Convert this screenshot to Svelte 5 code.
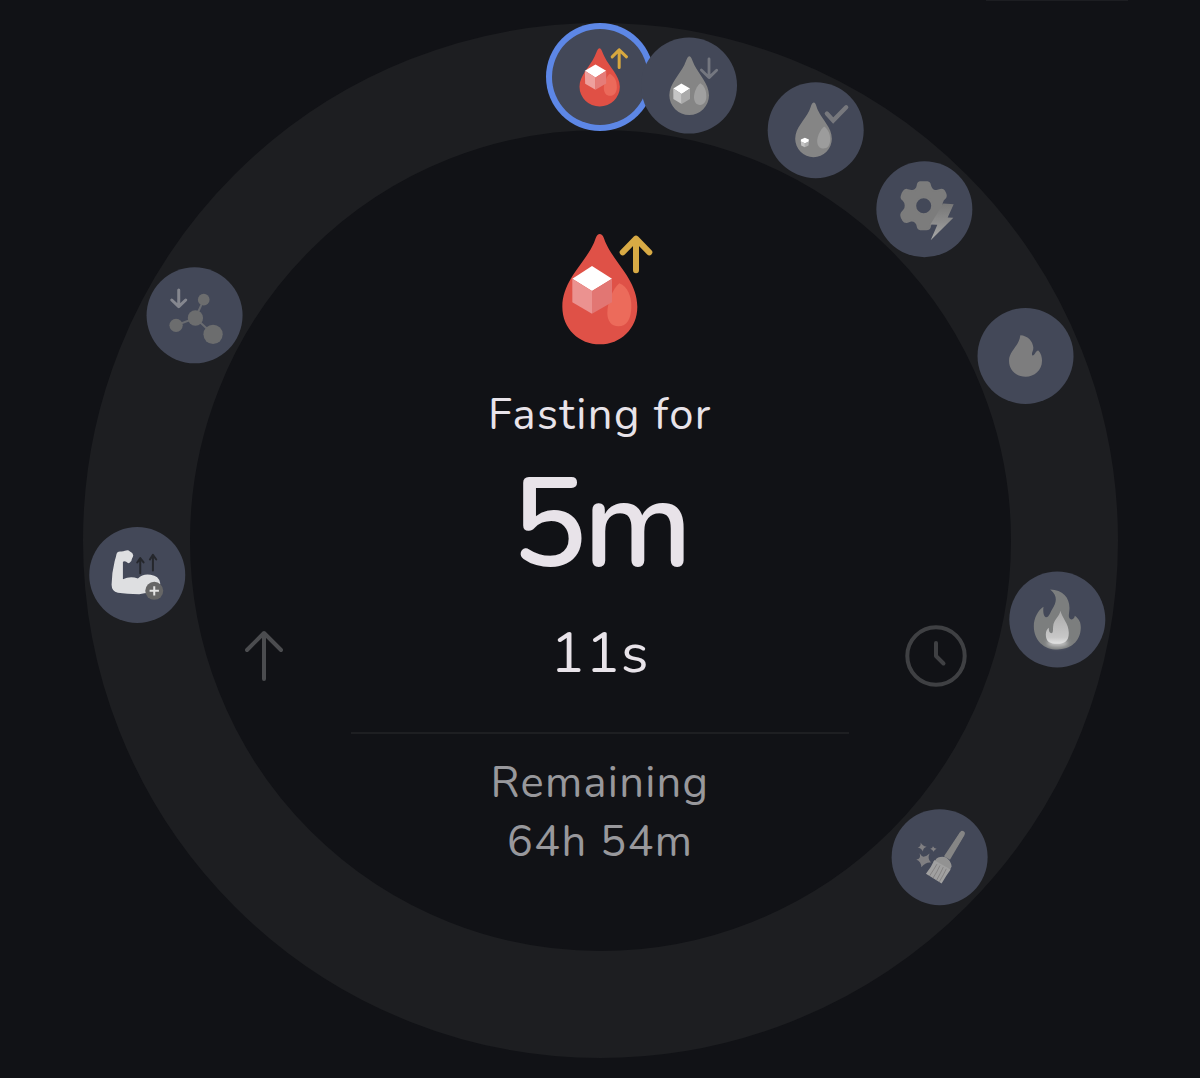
<script>
  const RADIUS = 464;

  // angle is in degrees, clockwise from the top of the ring
  const stages = [
    { icon: 'sugar-up', angle: 0, box: '66.5 55.5 288 288', active: true },
    { icon: 'sugar-down', angle: 11.06, box: '333 81 288 288' },
    { icon: 'sugar-ok', angle: 27.7, box: '22.5 36 288 288' },
    { icon: 'metabolism', angle: 44.35, box: '348 273 288 288' },
    { icon: 'fat-burn', angle: 66.5, box: '52.5 52.5 288 288' },
    { icon: 'ketosis', angle: 99.74, box: '58.5 33 288 288' },
    { icon: 'autophagy', angle: 132.95, box: '66 57 288 288' },
    { icon: 'growth', angle: 265.8, box: '27 49.5 288 288' },
    { icon: 'insulin', angle: 299.1, box: '49.5 51 288 288' },
  ];

  function place(angle) {
    const a = (angle * Math.PI) / 180;
    const x = Math.sin(a) * RADIUS;
    const y = -Math.cos(a) * RADIUS;
    return `transform: translate(${x.toFixed(2)}px, ${y.toFixed(2)}px)`;
  }
</script>

<main>
  <div class="sheet-edge"></div>
  <div class="dial">
    {#each stages as stage}
      <div class="stage" class:active={stage.active} style={place(stage.angle)}>
        <svg viewBox={stage.box} width="96" height="96">
          {#if stage.icon === 'sugar-up'}
            <path fill="#e05045" d="M209 113C215 113 217 124 224 139C238 169 270 195 270 229A60.500 59 0 0 1 149 229C149 195 180 169 194 139C201 124 203 113 209 113Z" />
            <path fill="#eb6a5b" d="M240 190C253 197 261 210 261 230C261 246 253 256 241 256C229 256 222 246 222 233C222 217 231 196 240 190Z" />
            <path fill="#fff" d="M197 162L229 181L197 201L165 181Z" />
            <path fill="#eea09d" d="M165 181L197 201V238L166 220Z" />
            <path fill="#e57c78" d="M229 181L197 201V238L229 219Z" />
            <path class="line" stroke="#d8a83f" stroke-width="9" d="M268 171V118M247 139L268 118L290 139" />
          {:else if stage.icon === 'sugar-down'}
            <path fill="#858585" d="M478 137C484 137 486 148 493 163C507 191 537 220 537 254A59.500 59 0 0 1 418 254C418 220 449 191 463 163C470 148 472 137 478 137Z" />
            <path fill="#a0a0a0" d="M511 218C522 224 529 239 529 257C529 273 522 283 510 283C498 283 492 273 492 260C492 244 501 225 511 218Z" />
            <path fill="#fff" d="M454 219L480 234L455 250L430 234Z" />
            <path fill="#c5c5c5" d="M430 234L455 250V280L430 265Z" />
            <path fill="#aaa" d="M480 234L455 250V280L480 265Z" />
            <path class="line" stroke="#747780" stroke-width="8.500" d="M537 145V200M514 178L537 201L560 179" />
          {:else if stage.icon === 'sugar-ok'}
            <path fill="#858585" d="M161 97C167 97 168 109 174 122C186 149 215 172 215 206A55 55 0 0 1 105 206C105 172 135 149 147 122C153 109 154 97 161 97Z" />
            <path fill="#9c9c9c" d="M192 169C203 177 210 190 210 208C210 225 202 235 190 235C178 235 171 226 171 213C171 198 181 178 192 169Z" />
            <path fill="#fff" d="M134 203L146 208L145 216L134 219L122 215V208Z" />
            <path fill="#c4c4c4" d="M122 213L134 219V231L123 226Z" />
            <path fill="#adadad" d="M146 213L134 219V231L145 226Z" />
            <path class="line square" stroke="#77787d" stroke-width="13" d="M200 130L219 151L258 111" />
          {:else if stage.icon === 'metabolism'}
            <defs>
              <linearGradient id="bolt" x1="0" y1="0" x2="0" y2="1">
                <stop offset="0" stop-color="#777" />
                <stop offset="0.5" stop-color="#8c8c8c" />
                <stop offset="1" stop-color="#aaa" />
              </linearGradient>
            </defs>
            <path
              fill="#7c7c7c"
              stroke="#7c7c7c"
              stroke-width="6"
              stroke-linejoin="round"
              fill-rule="evenodd"
              d="M479 336H501Q508 337 509 346C512 357 519 364 529 362L540 359Q549 357 553 366Q559 378 554 383L548 389C542 397 543 413 551 421Q558 426 556 437Q552 454 541 455L528 452C518 450 509 459 509 468Q508 477 498 477H480Q473 476 472 468C472 458 462 449 451 451L441 455Q433 457 428 449Q420 435 424 429L431 421C438 413 438 398 430 390Q422 385 424 378Q429 360 439 359L452 362C462 364 471 356 472 346Q473 337 479 336ZM490 381A25.500 25.500 0 1 0 490 432A25.500 25.500 0 1 0 490 381Z"
            />
            <path fill="url(#bolt)" d="M549 400L580 402L562 442L579 443L511 510L531 464L510 463Z" />
          {:else if stage.icon === 'fat-burn'}
            <path fill="#7d7d7e" d="M181 134C202 135 219 151 220 172C220 183 213 188 217 195C225 196 225 181 235 180C243 188 246 199 246 211C246 240 223 259 197 259C169 259 147 239 147 211C147 181 176 170 181 134Z" />
          {:else if stage.icon === 'ketosis'}
            <defs>
              <linearGradient id="inner" x1="0" y1="0" x2="0" y2="1">
                <stop offset="0" stop-color="#aaa" />
                <stop offset="0.8" stop-color="#c7c7c7" />
                <stop offset="1" stop-color="#e4e4e4" />
              </linearGradient>
              <filter id="glow" x="-30%" y="-100%" width="160%" height="300%">
                <feGaussianBlur stdDeviation="6" />
              </filter>
            </defs>
            <path fill="#7c7e7e" d="M181 87C219 88 239 111 239 142C239 156 235 166 239 173C246 181 254 175 255 166C269 177 273 186 273 202C272 244 241 267 203 267C161 267 132 239 132 197C132 173 145 149 161 139C159 155 162 169 168 170C178 171 180 158 188 145C199 127 206 107 181 87Z" />
            <ellipse cx="203" cy="248" rx="32" ry="10" fill="#c8c8c8" filter="url(#glow)" />
            <path fill="url(#inner)" d="M212 151C216 172 237 189 237 217C237 243 224 250 203 250C181 250 168 244 168 222C168 213 171 207 177 202C177 211 178 217 184 218C191 218 189 209 190 198C191 178 209 169 212 151Z" />
          {:else if stage.icon === 'autophagy'}
            <path class="line" stroke="#858585" stroke-width="15" d="M278 130L257 164" />
            <path fill="#858585" d="M271 126L285 134L241 209L223 198Z" />
            <path fill="#929292" d="M197 210Q206 197 228 201Q244 210 246 229L240 241L191 213Z" />
            <path fill="#a0a0a0" d="M194 210L243 238Q230 256 216 280L169 251Q184 232 194 210Z" />
            <path stroke="#777474" stroke-width="2" fill="none" d="M202 222Q194 236 180 257M211 226Q203 244 190 264M221 231Q214 247 201 270M230 236Q223 252 209 275" />
            <path fill="#807f82" d="M153 157Q158 167 171 170Q160 174 160 184Q155 174 144 173Q155 168 153 157ZM190 168Q193 174 201 176Q194 179 192 185Q189 179 182 176Q189 174 190 168ZM150 189Q158 202 164 199Q171 198 180 190Q172 205 184 217Q168 215 155 231Q155 215 140 208Q155 206 150 189Z" />
          {:else if stage.icon === 'growth'}
            <path fill="#dedfe1" d="M109 130Q111 123 119 123Q128 124 134 121Q144 117 149 123Q158 126 159 134Q158 141 155 145Q155 153 148 157Q144 160 138 154Q133 150 128 154V206Q150 196 173 204Q188 189 211 193Q236 196 240 218Q239 246 209 247Q191 248 177 251Q139 251 113 247Q94 243 94 223Q94 189 103 153Q107 141 109 130Z" />
            <path class="line" stroke="#25272c" stroke-width="6" d="M180 188V145M171 156L180 143L190 156M218 180V135M209 147L218 133L228 147" />
            <circle cx="222" cy="241" r="27" fill="#666" />
            <path stroke="#e4e4e4" stroke-width="6" d="M222 227V255M208 241H236" />
          {:else}
            <path stroke="#696b70" stroke-width="6" d="M196 203L221 148M196 203L138 225M196 203L249 252" />
            <g fill="#6c6d6e">
              <circle cx="221" cy="148" r="17.500" />
              <circle cx="196" cy="203" r="23" />
              <circle cx="138" cy="225" r="20" />
              <circle cx="249" cy="252" r="29" />
            </g>
            <path class="line" stroke="#85878f" stroke-width="9" d="M146 119V168M125 149L146 169L167 149" />
          {/if}
        </svg>
      </div>
    {/each}

    <section class="readout">
      <svg class="hero" viewBox="0 0 450 420" width="150" height="140">
        <path fill="#df5147" d="M209 42C219 42 221 54 227 68C253 128 322 181 322 260C322 326 271 373 210 373C147 373 97 326 97 260C97 181 166 128 192 68C198 54 200 42 209 42Z" />
        <path fill="#ec6b5b" d="M268 190C293 200 304 229 304 258C304 296 291 319 265 319C243 319 232 302 232 279C232 244 250 205 268 190Z" />
        <path fill="#fff" d="M186 138L246 176L186 213L127 176Z" />
        <path fill="#eb9290" d="M127 176L186 213V281L127 247Z" />
        <path fill="#e27673" d="M246 176L186 213V281L246 247Z" />
        <path class="line" stroke="#d8aa45" stroke-width="18" d="M318 151V56M278 97L318 56L358 97" />
      </svg>
      <div class="label">Fasting for</div>
      <div class="hours">5m</div>
      <div class="middle">
        <svg class="up" viewBox="0 0 38 52" width="38" height="52">
          <path class="line" stroke="#4b4c4f" stroke-width="4" d="M19 49V3M2 20L19 3L36 20" />
        </svg>
        <div class="seconds">11s</div>
        <svg viewBox="0 0 62 62" width="62" height="62">
          <circle cx="31" cy="31" r="28.700" fill="none" stroke="#3f4043" stroke-width="4" />
          <path class="line" stroke="#3f4043" stroke-width="4" d="M31 18V31L38.500 38.500" />
        </svg>
      </div>
      <div class="divider"></div>
      <div class="remaining">Remaining</div>
      <div class="remaining time">64h 54m</div>
    </section>
  </div>
</main>

<style>
  :global(body) {
    background: #111216;
  }

  main {
    position: relative;
    height: 1078px;
    padding-top: 23px;
    box-sizing: border-box;
    overflow: hidden;
    background: #111216;
    font-family: Nunito, Lato, sans-serif;
  }

  .sheet-edge {
    position: absolute;
    top: 0;
    left: 986px;
    width: 142px;
    height: 1px;
    background: #1d1e22;
  }

  .dial {
    position: relative;
    box-sizing: border-box;
    width: 1035px;
    height: 1035px;
    margin: 0 auto;
    border: 107px solid #1d1e21;
    border-radius: 50%;
  }

  .stage {
    position: absolute;
    left: calc(50% - 48px);
    top: calc(50% - 48px);
    width: 96px;
    height: 96px;
    border-radius: 50%;
    background: #434858;
  }

  .stage.active {
    box-shadow: 0 0 0 6px #5d87e6;
  }

  svg {
    display: block;
  }

  .line {
    fill: none;
    stroke-linecap: round;
    stroke-linejoin: round;
  }

  .line.square {
    stroke-linejoin: miter;
  }

  .readout {
    display: flex;
    flex-direction: column;
    align-items: center;
    padding-top: 90px;
    color: #e8e3e9;
    white-space: nowrap;
  }

  .hero {
    margin-left: 10px;
  }

  .label {
    margin-top: 29px;
    font-size: 43.500px;
    line-height: 52px;
    font-weight: 400;
    letter-spacing: 1.500px;
  }

  .hours {
    margin-top: 22px;
    font-size: 126px;
    line-height: 124px;
    font-weight: 600;
    letter-spacing: -3.500px;
  }

  .middle {
    display: flex;
    align-items: center;
    justify-content: space-between;
    width: 722px;
    height: 62px;
    margin-top: 38px;
    margin-left: 12px;
  }

  .up {
    margin-right: 12px;
  }

  .seconds {
    margin-top: -6px;
    font-size: 57px;
    line-height: 62px;
    letter-spacing: 1px;
  }

  .divider {
    width: 498px;
    height: 2px;
    margin-top: 45px;
    background: #1e1f22;
  }

  .remaining {
    margin-top: 23px;
    font-size: 43.500px;
    line-height: 52px;
    font-weight: 400;
    letter-spacing: 1.300px;
    color: #98989c;
  }

  .time {
    margin-top: 7px;
  }
</style>
